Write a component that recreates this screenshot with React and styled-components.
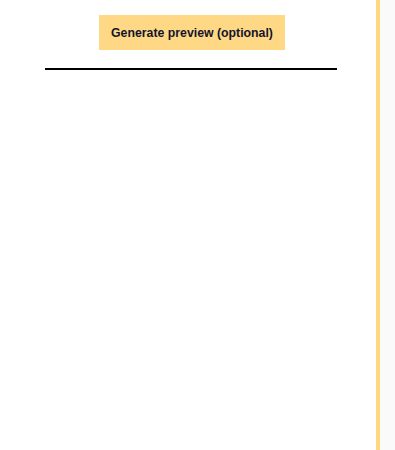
import React from "react";
import styled, { createGlobalStyle } from "styled-components";

const Global = createGlobalStyle`
  html, body { margin: 0; padding: 0; background: #ffffff; }
  body { font-family: "Liberation Sans", Arial, sans-serif; }
`;

const Page = styled.div`
  display: flex;
  height: 450px;
  width: 395px;
`;

const Main = styled.main`
  width: 368px;
  padding: 15px 0 0 8px;
  display: flex;
  flex-direction: column;
  align-items: center;
`;

const Button = styled.button`
  background: #ffd885;
  border: none;
  padding: 0 12px;
  height: 35px;
  font-family: "Liberation Sans", Arial, sans-serif;
  font-weight: bold;
  font-size: 12.3px;
  color: #14142b;
  cursor: pointer;
`;

const Divider = styled.hr`
  width: 292px;
  border: none;
  border-top: 2px solid #000;
  margin: 18px 2px 0 0;
`;

const Edge = styled.div`
  width: 4px;
  background: #ffd780;
`;

const Side = styled.div`
  flex: 1;
  background: #fafafa;
`;

export default function App() {
  return (
    <>
      <Global />
      <Page>
        <Main>
          <Button>Generate preview (optional)</Button>
          <Divider />
        </Main>
        <Edge />
        <Side />
      </Page>
    </>
  );
}
